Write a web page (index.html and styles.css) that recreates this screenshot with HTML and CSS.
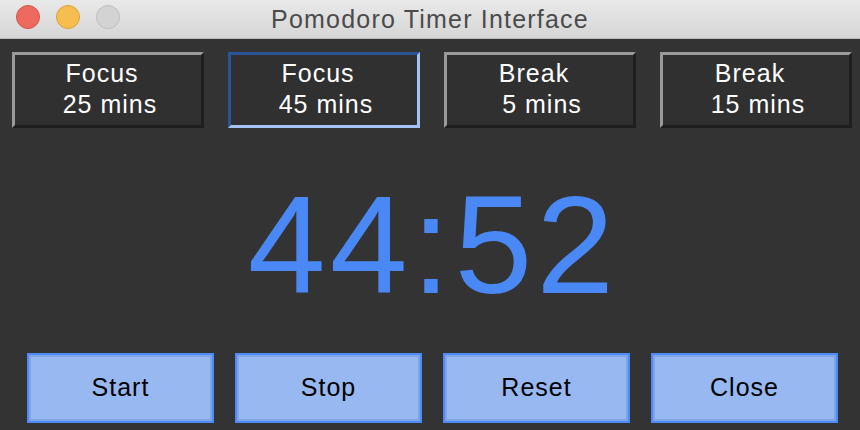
FILE: index.html
```html
<!DOCTYPE html>
<html>
<head>
<meta charset="utf-8">
<link rel="stylesheet" href="styles.css">
</head>
<body>
<div class="window">
  <div class="titlebar">
    <div class="lights">
      <span class="light red"></span>
      <span class="light yellow"></span>
      <span class="light gray"></span>
    </div>
    <div class="title">Pomodoro Timer Interface</div>
  </div>
  <div class="content">
    <div class="presets">
      <div class="preset"><span class="l1">Focus</span><span class="l2">25 mins</span></div>
      <div class="preset active"><span class="l1">Focus</span><span class="l2">45 mins</span></div>
      <div class="preset"><span class="l1">Break</span><span class="l2">5 mins</span></div>
      <div class="preset"><span class="l1">Break</span><span class="l2">15 mins</span></div>
    </div>
    <div class="timer">44:52</div>
    <div class="controls">
      <div class="ctl">Start</div>
      <div class="ctl">Stop</div>
      <div class="ctl">Reset</div>
      <div class="ctl">Close</div>
    </div>
  </div>
</div>
</body>
</html>
```
FILE: styles.css
```css
html, body {
  margin: 0;
  padding: 0;
  background: #333333;
  width: 860px;
  height: 430px;
  overflow: hidden;
  font-family: "Liberation Sans", Arial, sans-serif;
}
.window {
  width: 860px;
  height: 430px;
  display: flex;
  flex-direction: column;
}
.titlebar {
  height: 38px;
  border-bottom: 1px solid #b9b9b9;
  background: linear-gradient(#e9e9e9, #d6d6d6);
  display: flex;
  align-items: center;
  position: relative;
}
.lights {
  display: flex;
  gap: 16px;
  padding-left: 16px;
  padding-bottom: 4px;
}
.light {
  width: 22px;
  height: 22px;
  border-radius: 50%;
  border: 1px solid;
}
.red { background: #ee6a5e; border-color: #d5534a; }
.yellow { background: #f6be4f; border-color: #d9a13c; }
.gray { background: #d3d3d3; border-color: #bdbdbd; }
.title {
  position: absolute;
  left: 0;
  right: 0;
  top: 0;
  text-align: center;
  line-height: 38px;
  font-size: 25px;
  letter-spacing: 1.2px;
  color: #4b4b4b;
}
.content {
  flex: 1;
  display: flex;
  flex-direction: column;
}
.presets {
  display: grid;
  grid-template-columns: repeat(4, 192px);
  gap: 24px;
  padding: 13px 0 0 12px;
}
.preset {
  height: 76px;
  box-sizing: border-box;
  border: 3px solid;
  border-color: #9a9a9a #1e1e1e #1e1e1e #9a9a9a;
  background: #303030;
  color: #ffffff;
  font-size: 25px;
  letter-spacing: 1px;
  line-height: 31px;
  display: flex;
  flex-direction: column;
  align-items: center;
  justify-content: center;
  padding-bottom: 3px;
}
.preset.active {
  border-color: #2b5498 #a4c2f4 #a4c2f4 #2b5498;
}
.l1 { padding-right: 12px; }
.l2 { padding-left: 4px; }
.timer {
  margin-top: 47px;
  height: 140px;
  font-size: 140px;
  line-height: 140px;
  letter-spacing: 4px;
  padding-left: 6px;
  text-align: center;
  color: #4a88f5;
}
.controls {
  display: grid;
  grid-template-columns: repeat(4, 187px);
  gap: 21px;
  padding: 38px 0 0 27px;
}
.ctl {
  height: 70px;
  box-sizing: border-box;
  border: 2px solid #4b8bf5;
  box-shadow: inset 0 0 0 2px #7fa5e4;
  background: #97b8f1;
  color: #000000;
  font-size: 25px;
  letter-spacing: 1px;
  display: flex;
  align-items: center;
  justify-content: center;
  padding-bottom: 1px;
}
```
